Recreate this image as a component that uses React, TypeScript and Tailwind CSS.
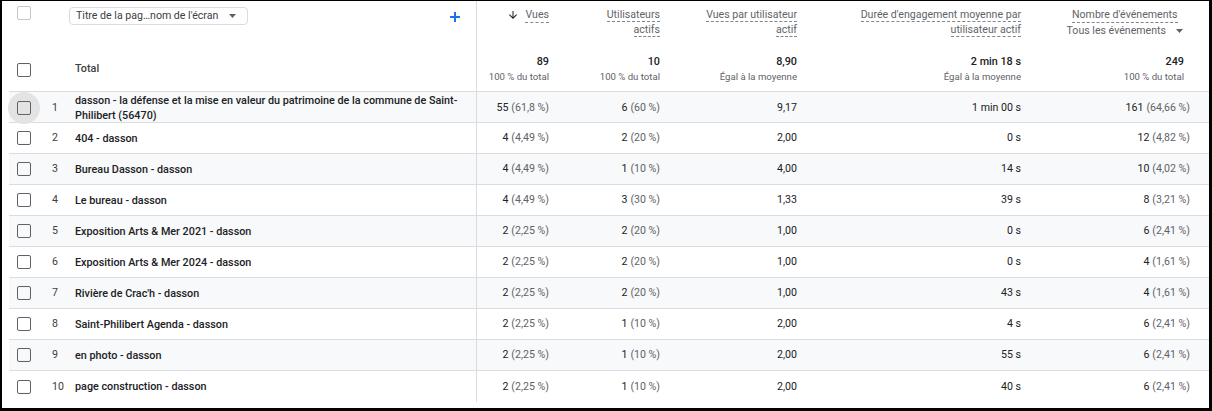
import React from 'react';

const cols = 'grid grid-cols-[31px_35px_402px_80px_111px_137px_224px_169px_1fr]';

interface Row {
  name: React.ReactNode;
  vues: [string, string];
  users: [string, string];
  vpu: string;
  duree: string;
  events: [string, string];
}

const rows: Row[] = [
  {
    name: (
      <>
        dasson - la défense et la mise en valeur du patrimoine de la commune de Saint-
        <br />
        Philibert (56470)
      </>
    ),
    vues: ['55', '(61,8 %)'],
    users: ['6', '(60 %)'],
    vpu: '9,17',
    duree: '1 min 00 s',
    events: ['161', '(64,66 %)'],
  },
  { name: '404 - dasson', vues: ['4', '(4,49 %)'], users: ['2', '(20 %)'], vpu: '2,00', duree: '0 s', events: ['12', '(4,82 %)'] },
  { name: 'Bureau Dasson - dasson', vues: ['4', '(4,49 %)'], users: ['1', '(10 %)'], vpu: '4,00', duree: '14 s', events: ['10', '(4,02 %)'] },
  { name: 'Le bureau - dasson', vues: ['4', '(4,49 %)'], users: ['3', '(30 %)'], vpu: '1,33', duree: '39 s', events: ['8', '(3,21 %)'] },
  { name: 'Exposition Arts & Mer 2021 - dasson', vues: ['2', '(2,25 %)'], users: ['2', '(20 %)'], vpu: '1,00', duree: '0 s', events: ['6', '(2,41 %)'] },
  { name: 'Exposition Arts & Mer 2024 - dasson', vues: ['2', '(2,25 %)'], users: ['2', '(20 %)'], vpu: '1,00', duree: '0 s', events: ['4', '(1,61 %)'] },
  { name: "Rivière de Crac'h - dasson", vues: ['2', '(2,25 %)'], users: ['2', '(20 %)'], vpu: '1,00', duree: '43 s', events: ['4', '(1,61 %)'] },
  { name: 'Saint-Philibert Agenda - dasson', vues: ['2', '(2,25 %)'], users: ['1', '(10 %)'], vpu: '2,00', duree: '4 s', events: ['6', '(2,41 %)'] },
  { name: 'en photo - dasson', vues: ['2', '(2,25 %)'], users: ['1', '(10 %)'], vpu: '2,00', duree: '55 s', events: ['6', '(2,41 %)'] },
  { name: 'page construction - dasson', vues: ['2', '(2,25 %)'], users: ['1', '(10 %)'], vpu: '2,00', duree: '40 s', events: ['6', '(2,41 %)'] },
];

const Checkbox = ({ light = false }: { light?: boolean }) => (
  <div
    className={`w-[14px] h-[14px] rounded-[2px] border-[1.5px] ${
      light ? 'border-[#c4c7c5]' : 'border-[#5f6368]'
    }`}
  />
);

const Caret = () => (
  <svg width="7" height="4" viewBox="0 0 7 4" className="shrink-0">
    <path d="M0 0h7L3.5 4z" fill="#5f6368" />
  </svg>
);

const Dashed = ({ children }: { children: React.ReactNode }) => (
  <span className="border-b border-dashed border-[#80868b]">{children}</span>
);

const TotalCell = ({ value, sub, last = false }: { value: string; sub: string; last?: boolean }) => (
  <div className={`flex flex-col items-end pt-[7px] ${last ? 'pr-[14px]' : 'pr-[8px]'}`}>
    <span className="text-[10.8px] leading-[16px] font-medium text-[#202124]">{value}</span>
    <span className="text-[9.6px] leading-[14px] text-[#5f6368]">{sub}</span>
  </div>
);

const Metric = ({ v }: { v: [string, string] }) => (
  <div className="flex items-center justify-end pr-[8px] text-[10.6px]">
    <span className="text-[#202124]">{v[0]}</span>
    <span className="ml-[3px] text-[#5f6368]">{v[1]}</span>
  </div>
);

export default function App() {
  return (
    <div className="h-[411px] w-[1212px] bg-black pt-px pl-[2px] pr-[3px] pb-[3px]">
      <div className="h-full bg-white pl-[7px] font-['Roboto',sans-serif]">
        {/* Column titles */}
        <div className={`${cols} h-[46px]`}>
          <div className="col-span-3 flex items-start border-r border-[#dadce0]">
            <div className="w-[31px] pl-[8px] pt-[5px]">
              <Checkbox light />
            </div>
            <div className="ml-[29px] mt-[6px] flex h-[18px] w-[179px] items-center justify-between rounded-[4px] border border-[#dadce0] pl-[6px] pr-[11px] text-[10.6px] text-[#3c4043]">
              <span className="whitespace-nowrap">Titre de la pag…nom de l'écran</span>
              <Caret />
            </div>
            <div className="ml-auto mr-[16px] mt-[11px]">
              <svg width="10" height="10" viewBox="0 0 10 10">
                <path d="M5 0v10M0 5h10" stroke="#1a73e8" strokeWidth="2" />
              </svg>
            </div>
          </div>
          <div className="flex justify-end pt-[6px] pr-[8px] text-right text-[10.6px] leading-[15px] text-[#5f6368]">
            <div className="flex items-start">
              <svg width="12" height="12" viewBox="0 0 24 24" className="mr-[6px] mt-[2px]">
                <path d="M20 12l-1.41-1.41L13 16.17V4h-2v12.17l-5.58-5.59L4 12l8 8 8-8z" fill="#202124" />
              </svg>
              <Dashed>Vues</Dashed>
            </div>
          </div>
          <div className="pt-[6px] pr-[8px] text-right text-[10.6px] leading-[15px] text-[#5f6368]">
            <Dashed>
              Utilisateurs
              <br />
              actifs
            </Dashed>
          </div>
          <div className="pt-[6px] pr-[8px] text-right text-[10.6px] leading-[15px] text-[#5f6368]">
            <Dashed>
              Vues par utilisateur
              <br />
              actif
            </Dashed>
          </div>
          <div className="pt-[6px] pr-[8px] text-right text-[10.6px] leading-[15px] text-[#5f6368]">
            <Dashed>
              Durée d'engagement moyenne par
              <br />
              utilisateur actif
            </Dashed>
          </div>
          <div className="flex justify-end pt-[6px] pr-[15px] text-[10.6px] leading-[15px] text-[#5f6368]">
            <div className="flex flex-col items-center">
              <Dashed>Nombre d'événements</Dashed>
              <div className="flex items-center">
                <span>Tous les événements</span>
                <span className="ml-[10px]">
                  <Caret />
                </span>
              </div>
            </div>
          </div>
        </div>

        {/* Totals */}
        <div className={`${cols} h-[45px] border-b border-[#dadce0]`}>
          <div className="pl-[8px] pt-[16px]">
            <Checkbox />
          </div>
          <div />
          <div className="flex items-center border-r border-[#dadce0] text-[10.8px] font-medium text-[#3c4043]">Total</div>
          <TotalCell value="89" sub="100 % du total" />
          <TotalCell value="10" sub="100 % du total" />
          <TotalCell value="8,90" sub="Égal à la moyenne" />
          <TotalCell value="2 min 18 s" sub="Égal à la moyenne" />
          <TotalCell value="249" sub="100 % du total" last />
        </div>

        {/* Rows */}
        {rows.map((r, i) => (
          <div
            key={i}
            className={`${cols} h-[31px] ${i < rows.length - 1 ? 'border-b border-[#dadce0]' : ''} ${
              i % 2 === 0 ? 'bg-[#f8f9fa]' : 'bg-white'
            }`}
          >
            <div className="flex items-center">
              {i === 0 ? (
                <div className="-ml-px flex h-[32px] w-[32px] shrink-0 items-center justify-center rounded-full bg-[#e3e3e3]">
                  <Checkbox />
                </div>
              ) : (
                <div className="pl-[8px]">
                  <Checkbox />
                </div>
              )}
            </div>
            <div className="flex items-center pl-[12px] text-[10.6px] text-[#3c4043]">{i + 1}</div>
            <div className="flex items-center whitespace-nowrap border-r border-[#dadce0] text-[10.8px] font-medium leading-[15px] text-[#202124]">
              <span>{r.name}</span>
            </div>
            <Metric v={r.vues} />
            <Metric v={r.users} />
            <div className="flex items-center justify-end pr-[8px] text-[10.6px] text-[#202124]">{r.vpu}</div>
            <div className="flex items-center justify-end pr-[8px] text-[10.6px] text-[#202124]">{r.duree}</div>
            <Metric v={r.events} />
          </div>
        ))}
      </div>
    </div>
  );
}
